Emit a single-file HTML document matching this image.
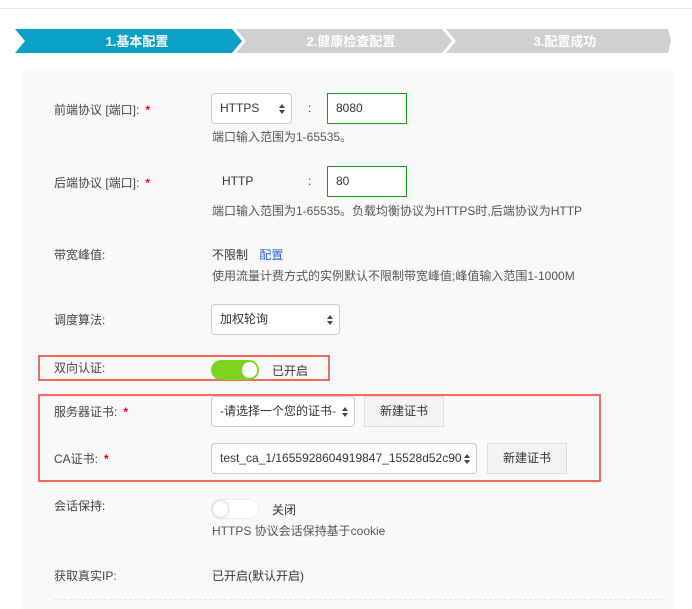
<!DOCTYPE html>
<html><head><meta charset="utf-8"><style>
*{margin:0;padding:0;box-sizing:border-box}
body{width:692px;height:609px;background:#fff;font-family:"Liberation Sans","Noto Sans CJK SC",sans-serif;font-size:12px;color:#333;position:relative;overflow:hidden}
.a{position:absolute;white-space:nowrap}
.lbl{left:54px;color:#444}
.star{color:#e00;font-weight:bold;margin-left:6px}
.hint{left:212px;color:#555}
.sel{position:absolute;background:#fff;border:1px solid #ccc;border-radius:4px;padding-left:8px;line-height:29px;font-size:12px}
.sel:after{content:"";position:absolute;right:6px;top:10px;border:3px solid transparent;border-bottom:4px solid #444;border-top:none}
.sel:before{content:"";position:absolute;right:6px;top:16px;border:3px solid transparent;border-top:4px solid #444;border-bottom:none}
.inp{position:absolute;background:#fff;border:1px solid #1a9a1a;padding-left:8px;line-height:29px}
.btn{position:absolute;background:#f3f3f3;border:1px solid #ddd;text-align:center;line-height:29px}
.red{position:absolute;border:2px solid #f26b5e}
</style></head><body>
<div class="a" style="left:0;top:8px;width:692px;height:1px;background:#e6e6e6"></div>
<svg class="a" style="left:0;top:29px" width="692" height="24">
<polygon points="15,0 232,0 242,12 232,24 15,24 25,12" fill="#0aa0c8"/>
<polygon points="236,0 442,0 452,12 442,24 236,24 246,12" fill="#cfcfcf"/>
<polygon points="446,0 668,0 671,12 668,24 446,24 456,12" fill="#cfcfcf"/>
<text x="137" y="17" fill="#fff" font-size="13" font-weight="bold" text-anchor="middle" font-family="Liberation Sans,Noto Sans CJK SC,sans-serif">1.基本配置</text>
<text x="351" y="17" fill="#fff" font-size="13" font-weight="bold" text-anchor="middle" font-family="Liberation Sans,Noto Sans CJK SC,sans-serif">2.健康检查配置</text>
<text x="565" y="17" fill="#fff" font-size="13" font-weight="bold" text-anchor="middle" font-family="Liberation Sans,Noto Sans CJK SC,sans-serif">3.配置成功</text>
</svg>
<div class="a" style="left:22px;top:69px;width:652px;height:540px;background:#f9f9f9"></div>

<div class="a lbl" style="top:101px">前端协议 [端口]:<span class="star">*</span></div>
<div class="sel" style="left:211px;top:93px;width:81px;height:31px">HTTPS</div>
<div class="a" style="left:308px;top:101px">:</div>
<div class="inp" style="left:327px;top:93px;width:80px;height:31px">8080</div>
<div class="a hint" style="top:128px">端口输入范围为1-65535。</div>

<div class="a lbl" style="top:174px">后端协议 [端口]:<span class="star">*</span></div>
<div class="a" style="left:222px;top:174px">HTTP</div>
<div class="a" style="left:308px;top:174px">:</div>
<div class="inp" style="left:327px;top:166px;width:80px;height:31px">80</div>
<div class="a hint" style="top:202px">端口输入范围为1-65535。负载均衡协议为HTTPS时,后端协议为HTTP</div>

<div class="a lbl" style="top:246px">带宽峰值:</div>
<div class="a" style="left:212px;top:246px">不限制 <span style="color:#2a5fd8;margin-left:8px">配置</span></div>
<div class="a hint" style="top:267px">使用流量计费方式的实例默认不限制带宽峰值;峰值输入范围1-1000M</div>

<div class="a lbl" style="top:311px">调度算法:</div>
<div class="sel" style="left:211px;top:304px;width:129px;height:31px">加权轮询</div>

<div class="red" style="left:38px;top:355px;width:292px;height:26px"></div>
<div class="a lbl" style="top:359px">双向认证:</div>
<div class="a" style="left:211px;top:360px;width:48px;height:20px;border-radius:10px;background:#7ed321"></div>
<div class="a" style="left:242px;top:362px;width:15px;height:16px;border-radius:8px;background:#fff"></div>
<div class="a" style="left:272px;top:362px">已开启</div>

<div class="red" style="left:38px;top:394px;width:563px;height:88px"></div>
<div class="a lbl" style="top:403px">服务器证书:<span class="star">*</span></div>
<div class="sel" style="left:211px;top:396px;width:144px;height:31px">-请选择一个您的证书-</div>
<div class="btn" style="left:364px;top:396px;width:80px;height:31px">新建证书</div>
<div class="a lbl" style="top:450px">CA证书:<span class="star">*</span></div>
<div class="sel" style="left:211px;top:443px;width:266px;height:31px">test_ca_1/1655928604919847_15528d52c90</div>
<div class="btn" style="left:487px;top:443px;width:80px;height:31px">新建证书</div>

<div class="a lbl" style="top:497px">会话保持:</div>
<div class="a" style="left:211px;top:499px;width:48px;height:20px;border-radius:10px;background:#fff;border:1px solid #eee"></div>
<div class="a" style="left:213px;top:501px;width:15px;height:16px;border-radius:8px;background:#fff;box-shadow:0 0 2px #999"></div>
<div class="a" style="left:272px;top:501px">关闭</div>
<div class="a hint" style="top:522px">HTTPS 协议会话保持基于cookie</div>

<div class="a lbl" style="top:567px">获取真实IP:</div>
<div class="a" style="left:212px;top:567px">已开启(默认开启)</div>
<div class="a" style="left:54px;top:599px;width:608px;border-top:1px dashed #e4e4e4"></div>
</body></html>
